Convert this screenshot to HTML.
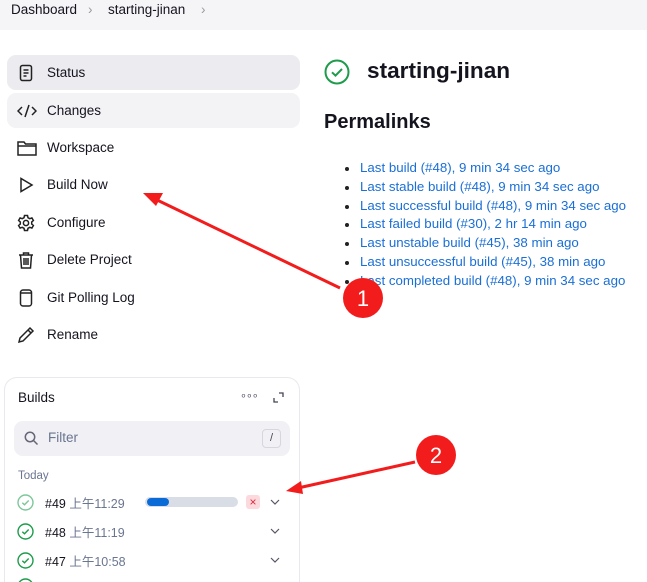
<!DOCTYPE html>
<html style="width:647px;height:582px;overflow:hidden"><head><meta charset="utf-8"><style>
*{margin:0;padding:0;box-sizing:border-box}
body{width:647px;height:582px;overflow:hidden;background:#fff;font-family:"Liberation Sans","Noto Sans CJK SC",sans-serif;color:#14141f;position:relative}
.bc{position:absolute;left:0;top:0;width:647px;height:30px;background:#f5f5f7;font-size:13.5px}
.bc span{position:absolute;top:2px}
.it{position:absolute;left:7px;width:293px;height:35px;border-radius:9px;font-size:13.5px}
.it .t{position:absolute;left:40px;top:10px}
.it svg{position:absolute;left:10px;top:9px}
.card{position:absolute;left:4px;top:377px;width:296px;height:205px;border:1px solid #e8e8ee;border-bottom:none;border-radius:13px 13px 0 0}
a{color:#1a6fd6;text-decoration:none}
ul{position:absolute;left:360px;top:159px;font-size:13.3px;line-height:18.8px;list-style:none}
ul li{position:relative}
ul li:before{content:"";position:absolute;left:-15px;top:8px;width:4px;height:4px;border-radius:2px;background:#222}
.row{position:absolute;left:17px;font-size:12.5px}
</style></head><body>
<div class="bc"><span style="left:11px">Dashboard</span><span style="left:88px;color:#999">›</span><span style="left:108px">starting-jinan</span><span style="left:201px;color:#999">›</span></div>

<div class="it" style="top:55px;background:#ebebf0"><svg width="18" height="18" viewBox="0 0 18 18" fill="none" stroke="#222" stroke-width="1.5"><rect x="3.5" y="1.5" width="11" height="15" rx="2"/><path d="M6.5 6h5M6.5 9h5M6.5 12h3"/></svg><span class="t">Status</span></div>
<div class="it" style="top:93px;background:#f3f3f6"><svg width="20" height="18" viewBox="0 0 20 18" fill="none" stroke="#222" stroke-width="1.5"><path d="M5 5L1 9l4 4M15 5l4 4-4 4M12 3L8 15"/></svg><span class="t">Changes</span></div>
<div class="it" style="top:130px"><svg width="20" height="18" viewBox="0 0 20 18" fill="none" stroke="#222" stroke-width="1.5"><path d="M1 3h6l1.5 2H19v11H1z M1 7h18"/></svg><span class="t">Workspace</span></div>
<div class="it" style="top:167px"><svg width="18" height="18" viewBox="0 0 18 18" fill="none" stroke="#222" stroke-width="1.5"><path d="M4 2.5v13l11-6.5z"/></svg><span class="t">Build Now</span></div>
<div class="it" style="top:205px"><svg width="18" height="18" viewBox="0 0 18 18" fill="none" stroke="#222" stroke-width="1.5"><circle cx="9" cy="9" r="2.6"/><path d="M7.5 1.5h3l.5 2.2 1.8 1 2.1-.8 1.5 2.6-1.7 1.5v2l1.7 1.5-1.5 2.6-2.1-.8-1.8 1-.5 2.2h-3l-.5-2.2-1.8-1-2.1.8-1.5-2.6 1.7-1.5v-2L1.6 6.5l1.5-2.6 2.1.8 1.8-1z"/></svg><span class="t">Configure</span></div>
<div class="it" style="top:242px"><svg width="18" height="18" viewBox="0 0 18 18" fill="none" stroke="#222" stroke-width="1.5"><path d="M2 4h14M6.5 4V2h5v2M3.5 4l1 13h9l1-13M7 7v7M9 7v7M11 7v7"/></svg><span class="t">Delete Project</span></div>
<div class="it" style="top:280px"><svg width="18" height="18" viewBox="0 0 18 18" fill="none" stroke="#222" stroke-width="1.5"><rect x="3.5" y="1" width="11" height="16" rx="2.5"/><path d="M3.5 4h11"/></svg><span class="t">Git Polling Log</span></div>
<div class="it" style="top:317px"><svg width="18" height="18" viewBox="0 0 18 18" fill="none" stroke="#222" stroke-width="1.5"><path d="M2 16l1-4L13 2l3 3L6 15z M11 4l3 3"/></svg><span class="t">Rename</span></div>

<div class="card">
<div style="position:absolute;left:13px;top:12px;font-size:13.5px">Builds</div>
<div style="position:absolute;left:235px;top:11px;font-size:11px;color:#556;letter-spacing:-1px">∘∘∘</div>
<svg style="position:absolute;left:268px;top:14px" width="11" height="11" viewBox="0 0 11 11" fill="none" stroke="#445" stroke-width="1.3"><path d="M6 1h4v4M5 10H1V6"/></svg>
<div style="position:absolute;left:9px;top:43px;width:276px;height:35px;background:#f0f0f5;border-radius:9px">
<svg style="position:absolute;left:10px;top:10px" width="15" height="15" viewBox="0 0 15 15" fill="none" stroke="#667" stroke-width="1.5"><circle cx="6" cy="6" r="4.7"/><path d="M9.5 9.5l4 4"/></svg>
<span style="position:absolute;left:34px;top:9px;font-size:13.5px;color:#6a7590">Filter</span>
<span style="position:absolute;left:248px;top:8px;width:19px;height:19px;border:1px solid #d6d6de;border-radius:4px;font-size:11px;color:#445;text-align:center;line-height:17px">/</span></div>
<div style="position:absolute;left:13px;top:92px;font-size:11.5px;color:#6a7590">Today</div>
</div>
<div class="row" style="top:494px"><svg width="17" height="17" viewBox="0 0 17 17" fill="none" stroke="#7cc79a" stroke-width="1.4"><circle cx="8.5" cy="8.5" r="7.5"/><path d="M5.3 8.7l2.2 2.1 4.2-4.3"/></svg></div>
<div class="row" style="top:523px"><svg width="17" height="17" viewBox="0 0 17 17" fill="none" stroke="#1e9b4c" stroke-width="1.4"><circle cx="8.5" cy="8.5" r="7.5"/><path d="M5.3 8.7l2.2 2.1 4.2-4.3"/></svg></div>
<div class="row" style="top:552px"><svg width="17" height="17" viewBox="0 0 17 17" fill="none" stroke="#1e9b4c" stroke-width="1.4"><circle cx="8.5" cy="8.5" r="7.5"/><path d="M5.3 8.7l2.2 2.1 4.2-4.3"/></svg></div>
<div class="row" style="top:578px;height:4px;overflow:hidden"><svg width="17" height="17" viewBox="0 0 17 17" fill="none" stroke="#1e9b4c" stroke-width="1.4"><circle cx="8.5" cy="8.5" r="7.5"/></svg></div>
<div class="row" style="left:45px;top:493px">#49 <span style="color:#6a7590">上午11:29</span></div>
<div class="row" style="left:45px;top:522px">#48 <span style="color:#6a7590">上午11:19</span></div>
<div class="row" style="left:45px;top:551px">#47 <span style="color:#6a7590">上午10:58</span></div>
<div style="position:absolute;left:145px;top:497px;width:93px;height:10px;background:#d9dde6;border-radius:5px"><div style="width:22px;height:8px;margin:1px 2px;background:#0b6bd6;border-radius:4px"></div></div>
<div style="position:absolute;left:246px;top:495px;width:14px;height:14px;background:#fbd9dc;border-radius:3px;color:#e0283a;font-size:12px;text-align:center;line-height:14px">×</div>
<svg style="position:absolute;left:270px;top:499px" width="10" height="6" viewBox="0 0 10 6" fill="none" stroke="#556" stroke-width="1.2"><path d="M1 1l4 4 4-4"/></svg>
<svg style="position:absolute;left:270px;top:528px" width="10" height="6" viewBox="0 0 10 6" fill="none" stroke="#556" stroke-width="1.2"><path d="M1 1l4 4 4-4"/></svg>
<svg style="position:absolute;left:270px;top:557px" width="10" height="6" viewBox="0 0 10 6" fill="none" stroke="#556" stroke-width="1.2"><path d="M1 1l4 4 4-4"/></svg>

<svg style="position:absolute;left:324px;top:59px" width="26" height="26" viewBox="0 0 26 26" fill="none" stroke="#1e9b4c" stroke-width="2"><circle cx="13" cy="13" r="11.5"/><path d="M8 13.3l3.5 3.3 6.5-6.6"/></svg>
<div style="position:absolute;left:367px;top:58px;font-size:22.6px;font-weight:bold">starting-jinan</div>
<div style="position:absolute;left:324px;top:111px;font-size:20px;font-weight:bold">Permalinks</div>
<ul>
<li><a>Last build (#48), 9 min 34 sec ago</a></li>
<li><a>Last stable build (#48), 9 min 34 sec ago</a></li>
<li><a>Last successful build (#48), 9 min 34 sec ago</a></li>
<li><a>Last failed build (#30), 2 hr 14 min ago</a></li>
<li><a>Last unstable build (#45), 38 min ago</a></li>
<li><a>Last unsuccessful build (#45), 38 min ago</a></li>
<li><a>Last completed build (#48), 9 min 34 sec ago</a></li>
</ul>

<svg style="position:absolute;left:0;top:0" width="647" height="582">
<line x1="340" y1="288" x2="155" y2="199" stroke="#f21c1c" stroke-width="3"/>
<polygon points="143,193 163,193 156,206" fill="#f21c1c"/>
<circle cx="363" cy="298" r="20" fill="#f21c1c"/>
<text x="363" y="306" font-family="Liberation Sans" font-size="22" fill="#fff" text-anchor="middle">1</text>
<line x1="415" y1="462" x2="298" y2="488" stroke="#f21c1c" stroke-width="3"/>
<polygon points="286,491 301,481 303,494" fill="#f21c1c"/>
<circle cx="436" cy="455" r="20" fill="#f21c1c"/>
<text x="436" y="463" font-family="Liberation Sans" font-size="22" fill="#fff" text-anchor="middle">2</text>
</svg>
</body></html>
